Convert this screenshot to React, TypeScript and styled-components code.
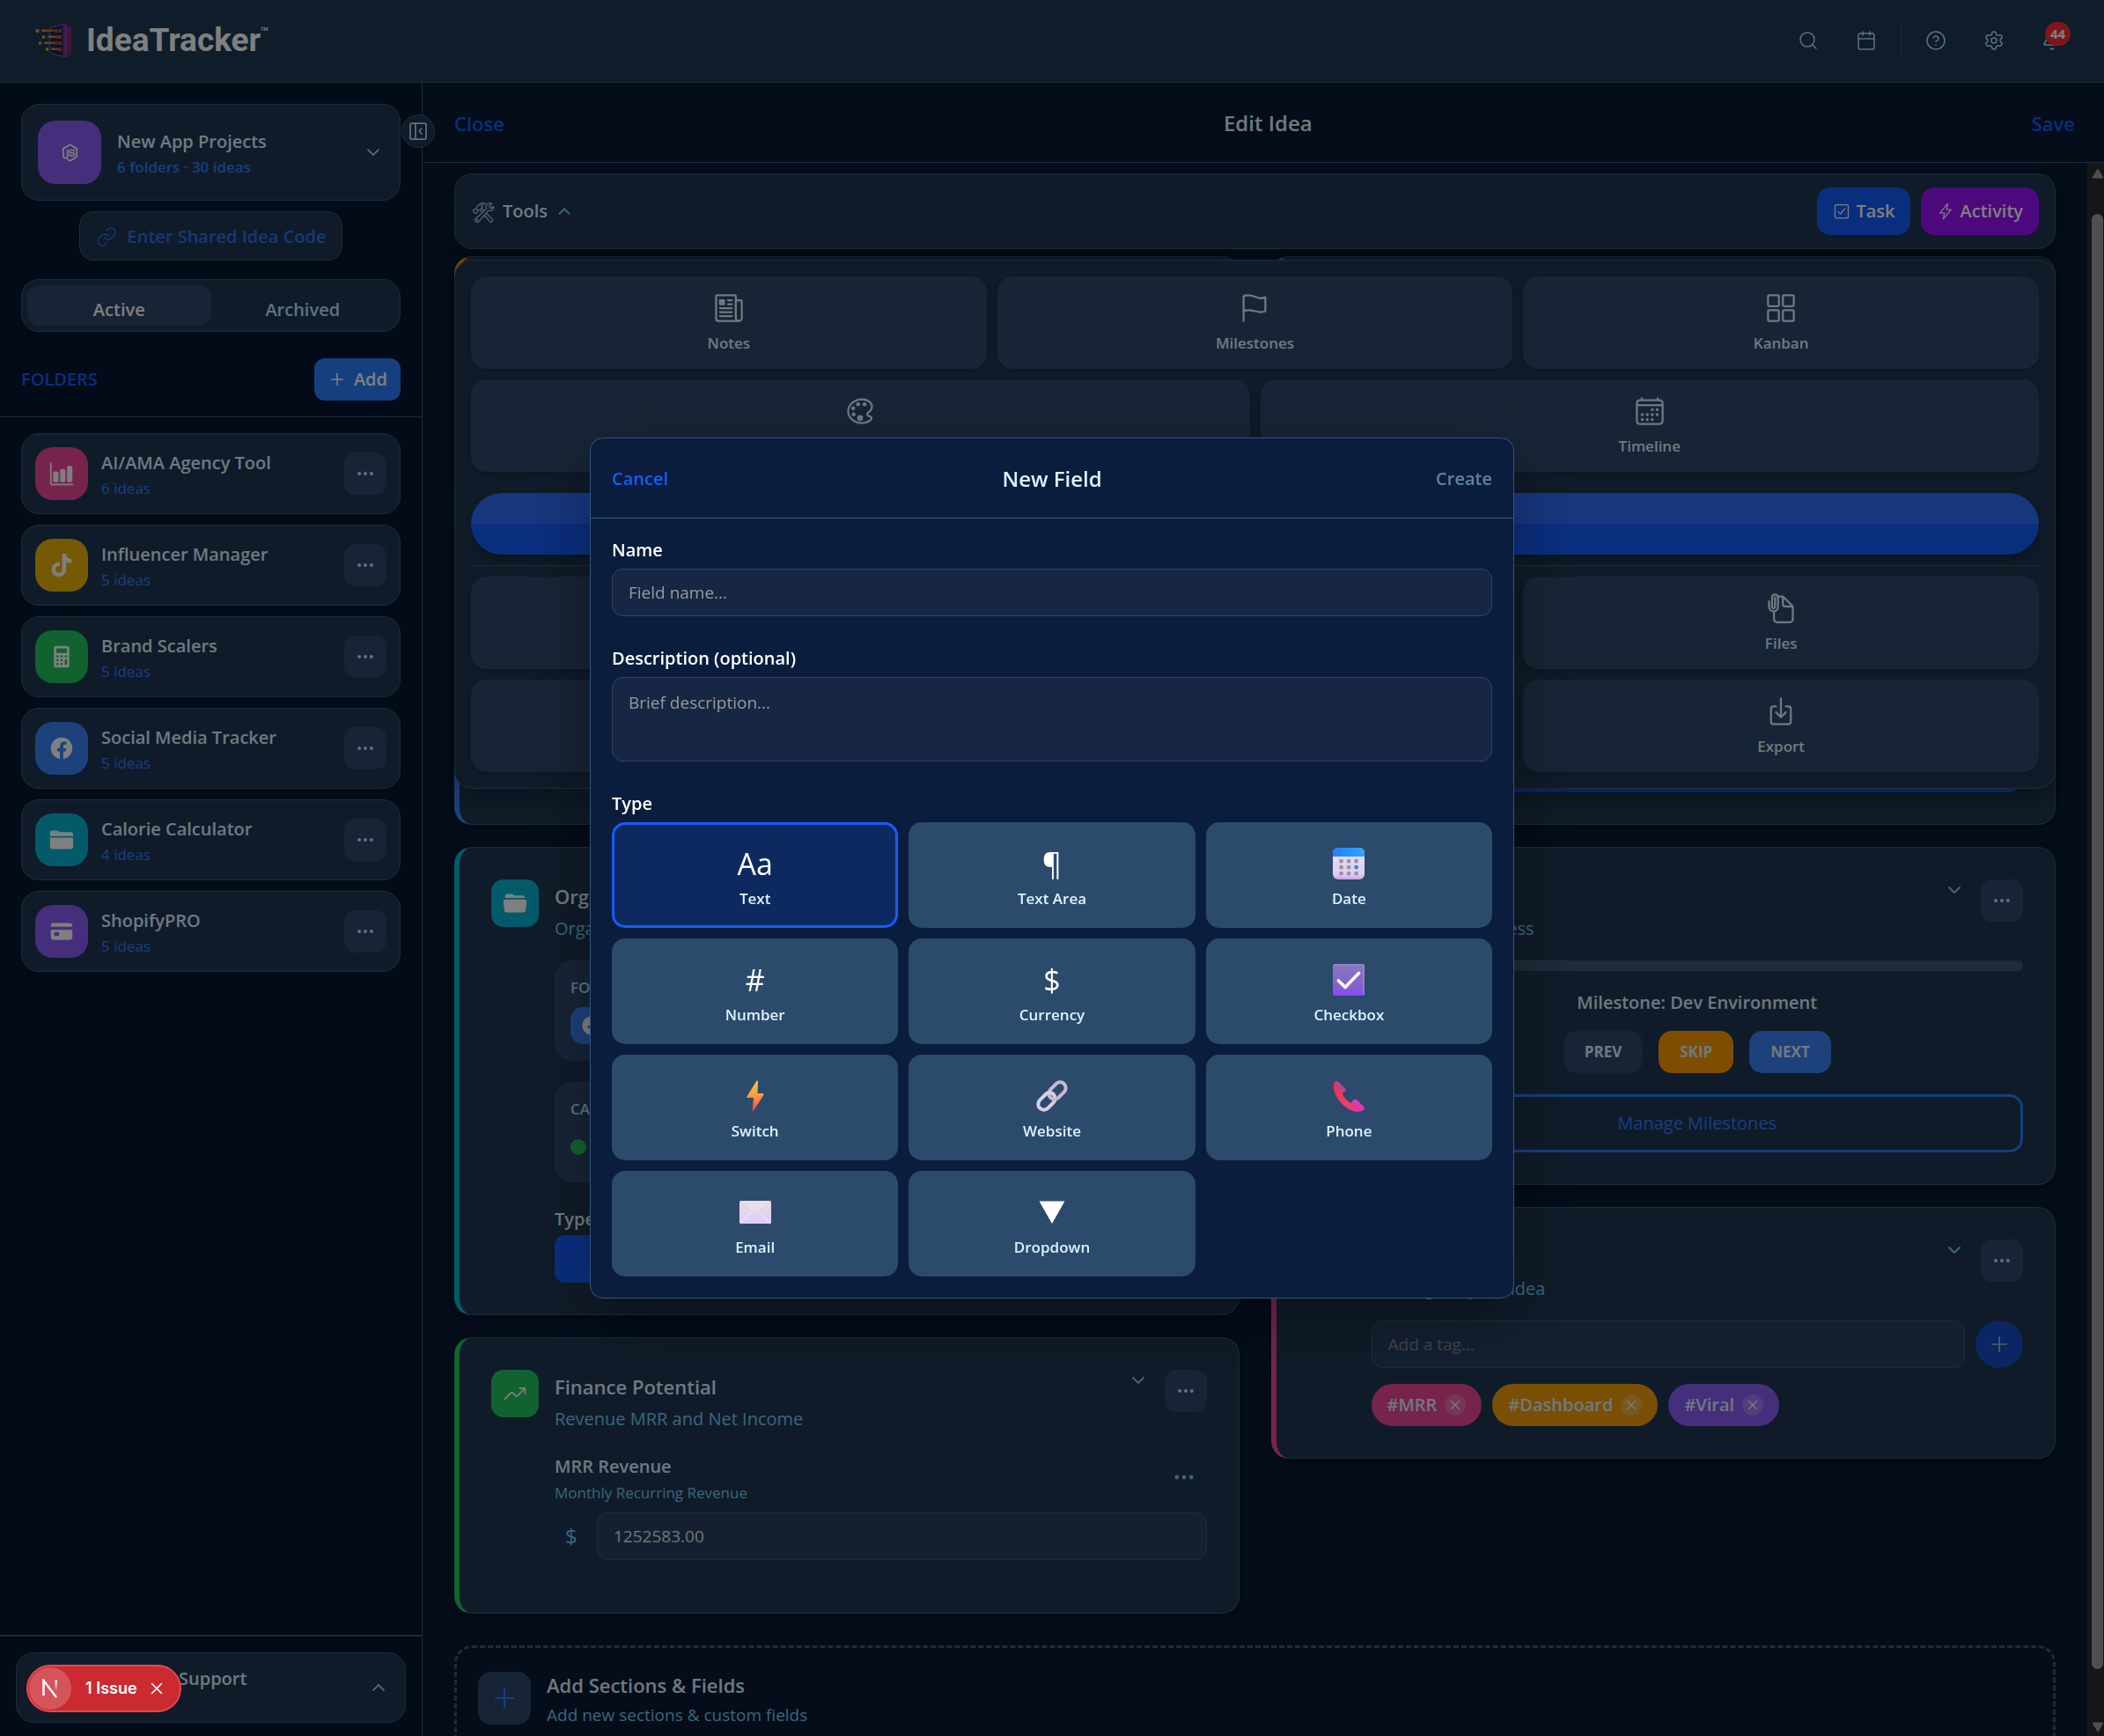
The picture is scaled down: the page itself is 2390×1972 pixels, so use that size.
import React from 'react';
import styled, { createGlobalStyle, css } from 'styled-components';
import {
  Calendar, ChevronDown, ChevronUp, CircleHelp, Bell, Link as LinkIcon, Plus, Search, Settings, X, PanelLeftClose,
} from 'lucide-react';
import {
  IoBarChart, IoCalculator, IoCalendarOutline, IoCard, IoCheckboxOutline, IoColorPaletteOutline,
  IoDocumentAttachOutline, IoDownloadOutline, IoEllipsisHorizontal, IoFlagOutline, IoFlashOutline, IoFolder,
  IoFolderOpen, IoGridOutline, IoLogoFacebook, IoLogoNodejs, IoLogoTiktok, IoNewspaperOutline, IoTrendingUp,
} from 'react-icons/io5';

const c = {
  page: '#081a32',
  side: '#04162e',
  bar: '#1f3854',
  card: '#1f3752',
  tile: '#2d496a',
  line: '#3a5674',
  field: '#284060',
  fieldLine: '#40587a',
  blue: '#155dfc',
  sky: '#2b7fff',
  head: '#dff2fe',
  soft: '#b8e6fe',
  muted: '#74ccf4',
};

const Global = createGlobalStyle`
  *, *::before, *::after { box-sizing: border-box; }
  body {
    margin: 0;
    background: ${c.page};
    color: ${c.head};
    font-family: "Open Sans", "Noto Sans", sans-serif;
    font-size: 20px;
    line-height: 30px;
  }
  button, input, textarea { font: inherit; color: inherit; }
  button { border: 0; padding: 0; background: none; cursor: pointer; }
  h1, h2, h3, p { margin: 0; font: inherit; }
  svg { display: block; flex: none; }
`;

const Shell = styled.div`
  display: flex;
  flex-direction: column;
  height: 100vh;
  overflow: hidden;
`;

/* ---------- top bar ---------- */

const TopBar = styled.header`
  display: flex;
  align-items: center;
  justify-content: space-between;
  height: 94px;
  flex: none;
  padding: 0 32px 2px 40px;
  background: ${c.bar};
  border-bottom: 1px solid ${c.line};
`;

const Brand = styled.a`
  display: flex;
  align-items: center;
  gap: 16px;
  color: #fff;
  text-decoration: none;
  font: 700 37px/40px Roboto, sans-serif;
`;

const Wordmark = styled.span`
  display: flex;
  align-items: flex-start;
`;

const Mark = styled.sup`
  font: 700 12px/18px "Open Sans", sans-serif;
`;

const TopActions = styled.nav`
  display: flex;
  align-items: center;
  gap: 12px;
  color: ${c.soft};
`;

const IconButton = styled.button`
  position: relative;
  display: grid;
  place-items: center;
  width: 54px;
  height: 54px;
`;

const Separator = styled.span`
  width: 1px;
  height: 36px;
  background: ${c.line};
`;

const Count = styled.span`
  position: absolute;
  top: 6px;
  left: 19px;
  width: 29px;
  height: 27px;
  border-radius: 14px;
  background: #fb2c36;
  color: #fff;
  font-size: 15px;
  font-weight: 700;
  line-height: 27px;
`;

/* ---------- sidebar ---------- */

const Body = styled.div`
  display: flex;
  flex: 1;
  min-height: 0;
`;

const Sidebar = styled.aside`
  position: relative;
  display: flex;
  flex-direction: column;
  width: 480px;
  flex: none;
  background: ${c.side};
  border-right: 1px solid ${c.line};
`;

const Collapse = styled.button`
  position: absolute;
  z-index: 2;
  top: 36px;
  right: -15px;
  display: grid;
  place-items: center;
  width: 38px;
  height: 38px;
  border: 1px solid ${c.line};
  border-radius: 50%;
  background: ${c.card};
  color: ${c.soft};
`;

const SideTop = styled.div`
  display: flex;
  flex-direction: column;
  padding: 24px 24px 18px;
  border-bottom: 1px solid ${c.line};
`;

const surface = css`
  background: ${c.card};
  border: 1px solid ${c.line};
  border-radius: 20px;
`;

const Workspace = styled.button`
  ${surface}
  display: flex;
  align-items: center;
  gap: 18px;
  height: 110px;
  padding: 0 18px;
  text-align: left;
  color: ${c.soft};
`;

const Badge = styled.span<{ $size: number; $color: string }>`
  display: grid;
  place-items: center;
  flex: none;
  width: ${p => p.$size}px;
  height: ${p => p.$size}px;
  border-radius: ${p => (p.$size > 54 ? 20 : 14)}px;
  background: ${p => p.$color};
  color: #fff;
`;

const Stack = styled.span`
  display: flex;
  flex-direction: column;
  flex: 1;
  min-width: 0;
`;

const SideText = styled(Stack)`
  padding-top: 4px;
`;

const Name = styled.span`
  color: ${c.head};
  font-weight: 600;
`;

const Meta = styled.span<{ $strong?: boolean }>`
  color: ${c.sky};
  font-size: 17px;
  font-weight: ${p => (p.$strong ? 600 : 400)};
  line-height: 28px;
`;

const ShareCode = styled.button`
  display: flex;
  align-items: center;
  align-self: center;
  gap: 12px;
  height: 56px;
  margin: 12px 0 21px;
  padding: 2px 18px 0;
  background: ${c.card};
  border: 1px solid ${c.line};
  border-radius: 16px;
  color: #2b72ea;
  font-weight: 600;
`;

const Tabs = styled.div`
  ${surface}
  display: grid;
  grid-template-columns: 1fr 1fr;
  height: 60px;
  padding: 6px;
`;

const Tab = styled.button<{ $on?: boolean }>`
  padding-top: 10px;
  border-radius: 14px;
  background: ${p => (p.$on ? c.tile : 'none')};
  color: ${p => (p.$on ? '#fff' : c.soft)};
  font-weight: 600;
`;

const FolderHead = styled.div`
  display: flex;
  align-items: center;
  justify-content: space-between;
  margin-top: 30px;
  color: ${c.blue};
  font-weight: 600;
`;

const AddButton = styled.button`
  display: flex;
  align-items: center;
  gap: 8px;
  height: 48px;
  padding: 0 15px;
  border-radius: 12px;
  background: ${c.sky};
  color: #fff;
  font-weight: 600;
`;

const FolderList = styled.ul`
  display: flex;
  flex-direction: column;
  gap: 12px;
  flex: 1;
  margin: 0;
  padding: 18px 24px;
  list-style: none;
`;

const FolderRow = styled.li`
  ${surface}
  display: flex;
  align-items: center;
  gap: 15px;
  height: 92px;
  padding: 0 15px;
`;

const MenuButton = styled.button`
  display: grid;
  place-items: center;
  width: 48px;
  height: 48px;
  flex: none;
  border-radius: 13px;
  background: ${c.tile};
  color: ${c.soft};
`;

const SideFoot = styled.div`
  padding: 18px 18px 15px;
  border-top: 2px solid ${c.line};
`;

const Support = styled.button`
  ${surface}
  display: flex;
  align-items: center;
  width: 100%;
  height: 80px;
  padding: 0 18px 0 184px;
  text-align: left;
  color: ${c.soft};
`;

const SupportText = styled(Stack)`
  padding-bottom: 20px;
`;

/* ---------- editor ---------- */

const Main = styled.main`
  display: flex;
  flex-direction: column;
  flex: 1;
  min-width: 0;
`;

const EditorBar = styled.div`
  display: flex;
  align-items: center;
  justify-content: space-between;
  height: 91px;
  flex: none;
  padding: 2px 33px 0 36px;
  border-bottom: 1px solid ${c.line};
  font-size: 22px;
`;

const TextButton = styled.button<{ $muted?: boolean }>`
  color: ${p => (p.$muted ? 'rgba(184, 230, 254, 0.5)' : c.blue)};
  font-weight: 600;
`;

const EditorTitle = styled.h1`
  font-size: 24px;
  font-weight: 600;
`;

const Viewport = styled.div`
  display: flex;
  flex: 1;
  min-height: 0;
  overflow: hidden;
`;

const Canvas = styled.div`
  display: flex;
  flex-direction: column;
  flex: 1;
  min-width: 0;
  padding: 12px 36px 0;
`;

const ToolBar = styled.section`
  ${surface}
  position: relative;
  display: flex;
  align-items: center;
  gap: 12px;
  height: 86px;
  flex: none;
  padding: 0 18px;
  box-shadow: 0 6px 24px rgba(0, 0, 0, 0.35);
`;

const ToolsToggle = styled.button`
  display: flex;
  align-items: center;
  gap: 8px;
  margin-right: auto;
  font-weight: 600;
  color: ${c.head};
`;

const Glyph = styled.span`
  font-size: 22px;
  font-weight: 400;
`;

const Action = styled.button<{ $color: string }>`
  display: flex;
  align-items: center;
  gap: 6px;
  height: 54px;
  padding: 0 18px;
  border-radius: 15px;
  background: ${p => p.$color};
  color: #fff;
  font-weight: 600;
`;

const ToolMenu = styled.div`
  ${surface}
  position: absolute;
  z-index: 1;
  top: 97px;
  left: -1px;
  right: -1px;
  display: flex;
  flex-direction: column;
  gap: 12px;
  padding: 18px;
  box-shadow: 0 8px 24px rgba(0, 0, 0, 0.35);
`;

const ToolRow = styled.div<{ $cols: number }>`
  display: grid;
  grid-template-columns: repeat(${p => p.$cols}, 1fr);
  gap: 12px;
`;

const ToolTile = styled.button`
  display: flex;
  flex-direction: column;
  align-items: center;
  justify-content: center;
  gap: 9px;
  height: 105px;
  padding-top: 2px;
  border-radius: 18px;
  background: ${c.tile};
  box-shadow: 0 3px 8px rgba(0, 0, 0, 0.2);
  color: ${c.head};
  font-size: 17px;
  font-weight: 600;
  line-height: 26px;
`;

const Pill = styled.button`
  height: 70px;
  margin-top: 12px;
  border-radius: 35px;
  background: linear-gradient(rgba(255, 255, 255, 0.1) 50%, transparent 50%) ${c.blue};
  box-shadow: 0 6px 14px rgba(0, 0, 0, 0.25);
`;

const Rule = styled.hr`
  width: 100%;
  height: 1px;
  margin: 0;
  border: 0;
  background: ${c.line};
`;

const Columns = styled.div`
  display: grid;
  grid-template-columns: 1fr 1fr;
  align-items: start;
  gap: 36px;
  margin-top: 8px;
`;

const Column = styled.div`
  display: flex;
  flex-direction: column;
  gap: 25px;
`;

const Section = styled.section<{ $accent: string; $min?: number }>`
  ${surface}
  display: flex;
  gap: 18px;
  min-height: ${p => p.$min ?? 0}px;
  padding: 36px;
  border-left: 6px solid ${p => p.$accent};
  box-shadow: 0 3px 9px rgba(0, 0, 0, 0.3);
`;

const SectionBody = styled.div`
  display: flex;
  flex-direction: column;
  flex: 1;
  min-width: 0;
`;

const SectionHead = styled.div`
  display: flex;
  gap: 18px;
  padding-bottom: 18px;
`;

const SectionTitle = styled.h2`
  font-size: 22px;
  font-weight: 600;
  line-height: 38px;
`;

const SectionNote = styled.p`
  color: ${c.muted};
  line-height: 36px;
`;

const Caret = styled.button`
  width: 24px;
  height: 24px;
  color: ${c.muted};
  svg { margin: 0 auto; }
`;

const Box = styled.div`
  display: flex;
  flex-direction: column;
  align-items: flex-start;
  gap: 9px;
  height: 114px;
  margin-bottom: 24px;
  padding: 18px;
  border-radius: 20px;
  background: ${c.tile};
`;

const BoxLabel = styled.h3`
  color: ${c.soft};
  font-size: 17px;
  font-weight: 600;
  line-height: 26px;
`;

const Chip = styled.span`
  display: flex;
  align-items: center;
  gap: 9px;
  height: 42px;
  padding: 0 12px;
  border-radius: 14px;
  background: #3b82f6;
  color: #fff;
`;

const Status = styled.span`
  display: flex;
  align-items: center;
  gap: 12px;
  padding-top: 6px;
`;

const Dot = styled.i`
  width: 18px;
  height: 18px;
  border-radius: 50%;
  background: #22c55e;
`;

const InnerCard = styled.div`
  height: 66px;
  margin-top: auto;
  border: 1px solid ${c.line};
  border-radius: 12px;
`;

const FieldTitle = styled.h3`
  font-weight: 600;
  line-height: 36px;
`;

const FieldNote = styled.span`
  color: ${c.muted};
  font-size: 17px;
  line-height: 24px;
`;

const TypeButton = styled.button`
  height: 54px;
  border-radius: 12px;
  background: ${c.blue};
  color: #fff;
`;

const BottomButton = styled.button`
  height: 66px;
  margin-top: auto;
  border-radius: 18px;
  background: ${c.blue};
`;

const FieldRow = styled.div`
  display: flex;
  align-items: center;
`;

const Dots = styled.button`
  display: grid;
  place-items: center;
  width: 51px;
  height: 36px;
  color: ${c.muted};
`;

const MoneyRow = styled.label`
  display: flex;
  align-items: center;
  margin: 10px 0 24px;
  color: ${c.muted};
  font-size: 24px;
`;

const Currency = styled.span`
  width: 48px;
  padding-left: 12px;
`;

const TextField = styled.input<{ $modal?: boolean }>`
  flex: none;
  width: 100%;
  height: 54px;
  padding: 0 18px;
  border: 1px solid ${p => (p.$modal ? '#34425f' : c.fieldLine)};
  border-radius: 12px;
  background: ${p => (p.$modal ? '#172642' : c.field)};
  color: #e6e6e6;
  font-size: 19px;
  outline: 0;
  &::placeholder { color: ${p => (p.$modal ? '#9a9a9e' : '#868688')}; opacity: 1; }
`;

const InlineField = styled(TextField)`
  flex: 1;
  width: auto;
  min-width: 0;
`;

const Progress = styled.div`
  height: 12px;
  border-radius: 6px;
  background: #3c5674;
`;

const Milestone = styled.p`
  margin: 20px 0 16px;
  text-align: center;
  font-weight: 600;
  line-height: 32px;
`;

const Steps = styled.div`
  display: flex;
  justify-content: center;
  gap: 18px;
`;

const Step = styled.button<{ $color: string }>`
  height: 48px;
  padding: 0 24px;
  border-radius: 15px;
  background: ${p => p.$color};
  color: ${c.head};
  font-size: 17px;
  font-weight: 700;
`;

const Outline = styled.button`
  height: 66px;
  margin-top: 24px;
  border: 3px solid ${c.sky};
  border-radius: 15px;
  color: ${c.sky};
  font-weight: 500;
`;

const TagEntry = styled.div`
  display: flex;
  gap: 12px;
`;

const Round = styled.button`
  display: grid;
  place-items: center;
  width: 54px;
  height: 54px;
  flex: none;
  border-radius: 50%;
  background: #164dc4;
  color: #a6b4ca;
`;

const TagList = styled.ul`
  display: flex;
  gap: 12px;
  margin: 18px 0 0;
  padding: 0;
  list-style: none;
`;

const Tag = styled.li<{ $color: string }>`
  display: flex;
  align-items: center;
  gap: 9px;
  height: 48px;
  padding: 0 18px;
  border-radius: 24px;
  background: ${p => p.$color};
  font-weight: 600;
`;

const TagRemove = styled.button`
  display: grid;
  place-items: center;
  width: 24px;
  height: 24px;
  border-radius: 50%;
  background: rgba(255, 255, 255, 0.2);
`;

const AddSection = styled.button`
  display: flex;
  gap: 18px;
  height: 126px;
  flex: none;
  margin-top: 36px;
  padding: 27px 24px;
  border: 3px dashed ${c.line};
  border-radius: 20px;
  text-align: left;
`;

const AddIcon = styled.span`
  display: grid;
  place-items: center;
  width: 60px;
  height: 60px;
  border-radius: 15px;
  background: ${c.tile};
  color: ${c.sky};
`;

const AddTitle = styled.span`
  font-size: 22px;
  font-weight: 600;
  line-height: 30px;
`;

const AddNote = styled.span`
  color: ${c.muted};
  font-size: 19px;
  line-height: 38px;
`;

const Scrollbar = styled.div`
  display: flex;
  flex-direction: column;
  align-items: center;
  justify-content: space-between;
  width: 19px;
  flex: none;
  padding: 6px 0 4px 4px;
  background: #2c2c2c;
  color: #9f9f9f;
`;

const Thumb = styled.i`
  width: 13px;
  height: 93%;
  margin: 40px 0 auto;
  border-radius: 7px;
  background: #9f9f9f;
`;

/* ---------- modal ---------- */

const Backdrop = styled.div`
  position: fixed;
  z-index: 5;
  inset: 0;
  display: flex;
  align-items: center;
  justify-content: center;
  background: rgba(0, 0, 0, 0.5);
`;

const Modal = styled.form`
  width: 1050px;
  max-width: 94vw;
  border: 1px solid #37547c;
  border-radius: 15px;
  background: #0a1d3d;
  box-shadow: 0 24px 72px rgba(0, 0, 0, 0.3);
`;

const ModalHead = styled.div`
  display: flex;
  align-items: center;
  justify-content: space-between;
  height: 91px;
  padding: 2px 24px 0;
  border-bottom: 1px solid #37547c;
`;

const ModalTitle = styled.h2`
  font-size: 24px;
  font-weight: 600;
`;

const ModalBody = styled.div`
  display: flex;
  flex-direction: column;
  gap: 36px;
  padding: 24px;
`;

const Field = styled.div`
  display: flex;
  flex-direction: column;
  gap: 9px;
`;

const Label = styled.label`
  color: #fff;
  font-weight: 600;
  line-height: 24px;
`;

const Area = styled(TextField)`
  height: 96px;
  padding: 13px 18px;
  line-height: 30px;
  resize: none;
`;

const TypeGrid = styled.div`
  display: grid;
  grid-template-columns: repeat(3, 1fr);
  gap: 12px;
`;

const TypeTile = styled.button<{ $on?: boolean }>`
  display: flex;
  flex-direction: column;
  align-items: center;
  justify-content: center;
  height: 120px;
  border: 3px solid ${p => (p.$on ? c.blue : 'transparent')};
  border-radius: 15px;
  background: ${p => (p.$on ? '#0d2960' : '#2c4a6c')};
  color: ${c.head};
  font-size: 17px;
  font-weight: 600;
  line-height: 26px;
`;

const TypeGlyph = styled.span`
  display: grid;
  place-items: center;
  height: 54px;
  color: #fff;
  font-size: 34px;
  font-weight: 400;
`;

const Issue = styled.div`
  position: fixed;
  z-index: 6;
  left: 30px;
  bottom: 27px;
  display: flex;
  align-items: center;
  height: 54px;
  padding: 0 15px 0 1px;
  border: 2px solid #e5484d;
  border-radius: 27px;
  background: #ca2a30;
  color: #fff;
  font: 600 18px/30px Inter, sans-serif;
`;

const IssueLogo = styled.span`
  display: grid;
  place-items: center;
  width: 48px;
  height: 48px;
  margin-right: 16px;
  border-radius: 50%;
  background: rgba(255, 255, 255, 0.2);
`;

const IssueClose = styled.button`
  margin-left: 11px;
`;

/* ---------- drawings ---------- */

const Logo = () => (
  <svg width="42" height="38" viewBox="0 0 42 38">
    <defs>
      <linearGradient id="lgA" x1="0" y1="0" x2="1" y2="0">
        <stop offset="0" stopColor="#1f6fb0" />
        <stop offset="1" stopColor="#a02fb4" />
      </linearGradient>
      <linearGradient id="lgB" x1="0" y1="0" x2="1" y2="0">
        <stop offset="0" stopColor="#d99a2a" />
        <stop offset="1" stopColor="#e2463a" />
      </linearGradient>
    </defs>
    <path d="M18 4 L33 .5 Q36 .5 36 4 V34 Q36 37.5 33 37.5 L18 34 Q16.500 33 16.500 31 V7 Q16.500 4.500 18 4Z" fill="#14284e" stroke="url(#lgA)" strokeWidth="1.500" />
    <path d="M31.500 1 L35 1 Q37 2 37 5 V33 Q37 36 35 37 L31.500 37Z" fill="#7a3a9c" />
    <path d="M37.500 2 H39 Q41 3 41 6 V32 Q41 35 39 36 H37.500Z" fill="#a01f78" />
    <g fill="url(#lgB)">
      <rect x="7" y="6.500" width="15" height="2.600" rx="1.300" />
      <rect x="14" y="13.500" width="16" height="2.600" rx="1.300" />
      <rect x="10" y="20.500" width="16" height="2.600" rx="1.300" />
      <rect x="18" y="27.500" width="12" height="2.600" rx="1.300" />
    </g>
    <g fill="#d23c2e">
      <rect x="22" y="6" width="3.500" height="4" /><rect x="26.500" y="6" width="3.500" height="4" />
      <rect x="25" y="13" width="5" height="4" />
      <rect x="22" y="20" width="3.500" height="4" /><rect x="26.500" y="20" width="3.500" height="4" />
      <rect x="25" y="27" width="5" height="4" />
    </g>
    <g fill="#e0a02c">
      <circle cx="2.500" cy="8" r="2.200" /><circle cx="9.500" cy="15" r="1.900" />
      <circle cx="5.500" cy="22" r="1.900" /><circle cx="13.500" cy="29" r="1.900" />
    </g>
  </svg>
);

const DateArt = () => (
  <svg width="36" height="36" viewBox="0 0 36 36">
    <defs>
      <linearGradient id="dTop" x1="0" y1="0" x2="1" y2="0">
        <stop offset="0" stopColor="#2a7df5" /><stop offset="1" stopColor="#2fa6ff" />
      </linearGradient>
      <linearGradient id="dBody" x1="0" y1="0" x2="0" y2="1">
        <stop offset="0" stopColor="#e9e2ef" /><stop offset=".85" stopColor="#dccff0" /><stop offset="1" stopColor="#cfa0ea" />
      </linearGradient>
    </defs>
    <rect x="0" y="0" width="36" height="36" rx="6" fill="url(#dBody)" />
    <path d="M0 10 V6 Q0 0 6 0 H30 Q36 0 36 6 V10Z" fill="url(#dTop)" />
    <g fill="#998fa8">
      {[13, 20, 27].map(y => [7.5, 16, 24.5].map(x => (
        <rect key={`${x}-${y}`} x={x} y={y} width="4.200" height="4.200" rx=".8" fill={x > 20 && y === 20 ? '#1d8ceb' : undefined} />
      )))}
    </g>
  </svg>
);

const CheckArt = () => (
  <svg width="36" height="36" viewBox="0 0 36 36">
    <defs>
      <linearGradient id="ck" x1="0" y1="0" x2="0" y2="1">
        <stop offset="0" stopColor="#8a78bd" /><stop offset=".7" stopColor="#8461cf" /><stop offset="1" stopColor="#8c46f5" />
      </linearGradient>
    </defs>
    <rect width="36" height="36" rx="2.500" fill="url(#ck)" />
    <path d="M1 1 H35 V35" fill="none" stroke="#9d8cd0" strokeWidth="1.200" />
    <path d="M6.500 19 L14 26.500 L29.500 10.500" fill="none" stroke="#fff" strokeWidth="3.600" strokeLinecap="round" strokeLinejoin="round" />
  </svg>
);

const BoltArt = () => (
  <svg width="36" height="36" viewBox="0 0 36 36">
    <defs>
      <linearGradient id="bolt" x1="0" y1="0" x2="0" y2="1">
        <stop offset="0" stopColor="#ffc83d" /><stop offset=".5" stopColor="#ff9a3c" /><stop offset="1" stopColor="#f0405a" />
      </linearGradient>
    </defs>
    <path d="M19.500 .8 L8.500 18.500 Q7.800 20 9.300 20 H16 L14.800 34 Q15 36 16.300 34.600 L27.400 16.700 Q28.200 15 26.500 15 H20.500 L21 1.300 Q20.600 0 19.500 .8Z" fill="url(#bolt)" />
  </svg>
);

const ChainArt = () => (
  <svg width="36" height="36" viewBox="0 0 36 36">
    <g fill="none" strokeWidth="4" transform="rotate(-45 18 18)">
      <rect x="-1.500" y="11.500" width="22" height="13" rx="6.500" stroke="#d9cfe0" />
      <rect x="15.500" y="11.500" width="22" height="13" rx="6.500" stroke="#c6b9cf" />
      <path d="M14 11.500 Q20.500 12 20.500 18" stroke="#d9cfe0" />
    </g>
  </svg>
);

const PhoneArt = () => (
  <svg width="36" height="36" viewBox="0 0 36 36">
    <defs>
      <linearGradient id="ph" x1="0" y1="0" x2="1" y2="1">
        <stop offset="0" stopColor="#e8304a" /><stop offset=".6" stopColor="#f03c6e" /><stop offset="1" stopColor="#e830b0" />
      </linearGradient>
    </defs>
    <path d="M2.500 1.500 C0 4 0 10 3 16 C7 25 14 32 23 35 C28 36.500 33 36 35 33.500 L24 23 L20.500 26 C16 24 12 19 11 15 L14 12 Z" fill="url(#ph)" />
    <path d="M2.800 1.200 Q4.500 0 6 1.500 L14 9.500 Q15.500 11.500 13.500 13 Q11 14.500 9 12.500 Q4 8 2.800 1.200Z" fill="#b8458f" />
    <path d="M22.500 23.500 Q25 20 27.500 22.500 L35 30 Q36.800 32 34.500 34 Q28 32 23 27 Q21.500 25 22.500 23.500Z" fill="#d93bb4" />
  </svg>
);

const MailArt = () => (
  <svg width="36" height="36" viewBox="0 0 36 36">
    <defs>
      <linearGradient id="ml" x1="0" y1="0" x2="0" y2="1">
        <stop offset="0" stopColor="#e6dde6" /><stop offset="1" stopColor="#e2cdf8" />
      </linearGradient>
    </defs>
    <rect x="0" y="5" width="36" height="26" rx="1.500" fill="url(#ml)" />
    <path d="M1 30 L14 18 M35 30 L22 18" stroke="#f4ecfa" strokeWidth="1" />
    <path d="M0 6 L16 19 Q18 20.500 20 19 L36 6" fill="#e8e0e9" stroke="#d6cadf" strokeWidth=".8" />
  </svg>
);

const TriangleArt = () => (
  <svg width="36" height="36" viewBox="0 0 36 36"><path d="M3.500 5.500 H32.500 L18 31Z" fill="#fff" /></svg>
);

const NextArt = () => (
  <svg width="20" height="22" viewBox="0 0 20 22">
    <defs>
      <linearGradient id="nx" x1="0" y1="0" x2="0" y2="1">
        <stop offset="0" stopColor="#fff" /><stop offset="1" stopColor="#fff" stopOpacity="0" />
      </linearGradient>
    </defs>
    <path d="M2.500 19 V2 L17 21" fill="none" stroke="#fff" strokeWidth="2.400" />
    <rect x="15.500" y="1.500" width="2.400" height="13" fill="url(#nx)" />
  </svg>
);

/* ---------- data ---------- */

const folders = [
  { name: 'AI/AMA Agency Tool', ideas: 6, color: '#ec4899', Icon: IoBarChart },
  { name: 'Influencer Manager', ideas: 5, color: '#eab308', Icon: IoLogoTiktok },
  { name: 'Brand Scalers', ideas: 5, color: '#22c55e', Icon: IoCalculator },
  { name: 'Social Media Tracker', ideas: 5, color: '#3b82f6', Icon: IoLogoFacebook },
  { name: 'Calorie Calculator', ideas: 4, color: '#06b6d4', Icon: IoFolder },
  { name: 'ShopifyPRO', ideas: 5, color: '#8b5cf6', Icon: IoCard },
];

const tags = [
  { name: '#MRR', color: '#ec4899' },
  { name: '#Dashboard', color: '#f59e0b' },
  { name: '#Viral', color: '#8b5cf6' },
];

const types: { name: string; glyph: React.ReactNode }[] = [
  { name: 'Text', glyph: 'Aa' },
  { name: 'Text Area', glyph: '¶' },
  { name: 'Date', glyph: <DateArt /> },
  { name: 'Number', glyph: '#' },
  { name: 'Currency', glyph: '$' },
  { name: 'Checkbox', glyph: <CheckArt /> },
  { name: 'Switch', glyph: <BoltArt /> },
  { name: 'Website', glyph: <ChainArt /> },
  { name: 'Phone', glyph: <PhoneArt /> },
  { name: 'Email', glyph: <MailArt /> },
  { name: 'Dropdown', glyph: <TriangleArt /> },
];

const Tile = ({ Icon, children }: { Icon?: React.ComponentType<{ size?: number }>; children?: React.ReactNode }) => (
  <ToolTile type="button">
    {Icon && <Icon size={36} />}
    {children}
  </ToolTile>
);

const Heading = ({ title, note }: { title: string; note: string }) => (
  <SectionHead>
    <Stack>
      <SectionTitle>{title}</SectionTitle>
      <SectionNote>{note}</SectionNote>
    </Stack>
    <Caret type="button" aria-label={`Collapse ${title}`}><ChevronDown size={24} strokeWidth={2} /></Caret>
    <MenuButton type="button" aria-label={`${title} menu`}><IoEllipsisHorizontal size={22} /></MenuButton>
  </SectionHead>
);

export default function App() {
  return (
    <Shell>
      <Global />
      <TopBar>
        <Brand href="#">
          <Logo />
          <Wordmark>IdeaTracker<Mark>™</Mark></Wordmark>
        </Brand>
        <TopActions aria-label="Main">
          <IconButton aria-label="Search"><Search size={24} strokeWidth={1.5} /></IconButton>
          <IconButton aria-label="Calendar"><Calendar size={24} strokeWidth={1.5} /></IconButton>
          <Separator />
          <IconButton aria-label="Help"><CircleHelp size={24} strokeWidth={1.5} /></IconButton>
          <IconButton aria-label="Settings"><Settings size={24} strokeWidth={1.5} /></IconButton>
          <IconButton aria-label="Notifications"><Bell size={24} strokeWidth={1.5} /><Count>44</Count></IconButton>
        </TopActions>
      </TopBar>

      <Body>
        <Sidebar>
          <Collapse aria-label="Collapse sidebar"><PanelLeftClose size={24} strokeWidth={1.75} /></Collapse>
          <SideTop>
            <Workspace>
              <Badge $size={72} $color="#8b5cf6"><IoLogoNodejs size={23} /></Badge>
              <SideText>
                <Name>New App Projects</Name>
                <Meta $strong>6 folders · 30 ideas</Meta>
              </SideText>
              <ChevronDown size={24} strokeWidth={1.75} />
            </Workspace>
            <ShareCode><LinkIcon size={24} strokeWidth={1.5} />Enter Shared Idea Code</ShareCode>
            <Tabs>
              <Tab $on>Active</Tab>
              <Tab>Archived</Tab>
            </Tabs>
            <FolderHead>
              FOLDERS
              <AddButton><Plus size={22} strokeWidth={1.75} />Add</AddButton>
            </FolderHead>
          </SideTop>
          <FolderList>
            {folders.map(({ name, ideas, color, Icon }) => (
              <FolderRow key={name}>
                <Badge $size={60} $color={color}><Icon size={28} /></Badge>
                <SideText>
                  <Name>{name}</Name>
                  <Meta>{ideas} ideas</Meta>
                </SideText>
                <MenuButton aria-label={`${name} menu`}><IoEllipsisHorizontal size={22} /></MenuButton>
              </FolderRow>
            ))}
          </FolderList>
          <SideFoot>
            <Support>
              <SupportText><Name>Support</Name></SupportText>
              <ChevronUp size={24} strokeWidth={1.75} />
            </Support>
          </SideFoot>
        </Sidebar>

        <Main>
          <EditorBar>
            <TextButton>Close</TextButton>
            <EditorTitle>Edit Idea</EditorTitle>
            <TextButton>Save</TextButton>
          </EditorBar>
          <Viewport>
            <Canvas>
              <ToolBar>
                <ToolsToggle>
                  <Glyph>🛠</Glyph>Tools<ChevronUp size={22} strokeWidth={2} color={c.muted} />
                </ToolsToggle>
                <Action $color={c.blue}><IoCheckboxOutline size={20} />Task</Action>
                <Action $color="#9810fa"><IoFlashOutline size={20} />Activity</Action>
                <ToolMenu>
                  <ToolRow $cols={3}>
                    <Tile Icon={IoNewspaperOutline}>Notes</Tile>
                    <Tile Icon={IoFlagOutline}>Milestones</Tile>
                    <Tile Icon={IoGridOutline}>Kanban</Tile>
                  </ToolRow>
                  <ToolRow $cols={2}>
                    <Tile Icon={IoColorPaletteOutline}>Design</Tile>
                    <Tile Icon={IoCalendarOutline}>Timeline</Tile>
                  </ToolRow>
                  <Pill aria-label="Assistant" />
                  <Rule />
                  <ToolRow $cols={3}>
                    <Tile /><Tile />
                    <Tile Icon={IoDocumentAttachOutline}>Files</Tile>
                  </ToolRow>
                  <ToolRow $cols={3}>
                    <Tile /><Tile />
                    <Tile Icon={IoDownloadOutline}>Export</Tile>
                  </ToolRow>
                </ToolMenu>
              </ToolBar>

              <Columns>
                <Column>
                  <Section $accent="#fe9a00" $min={270} />
                  <Section $accent="#3b82f6" $min={351}>
                    <Badge $size={54} $color="#3b82f6" />
                    <SectionBody><InnerCard /></SectionBody>
                  </Section>
                  <Section $accent="#06b6d4">
                    <Badge $size={54} $color="#06b6d4"><IoFolderOpen size={28} /></Badge>
                    <SectionBody>
                      <Heading title="Organization" note="Organize your idea" />
                      <Box>
                        <BoxLabel>FOLDER</BoxLabel>
                        <Chip><IoLogoFacebook size={24} />Social Media Tracker</Chip>
                      </Box>
                      <Box>
                        <BoxLabel>CATEGORY</BoxLabel>
                        <Status><Dot />Active</Status>
                      </Box>
                      <FieldTitle>Type</FieldTitle>
                      <TypeButton aria-label="Idea type" />
                    </SectionBody>
                  </Section>
                  <Section $accent="#22c55e">
                    <Badge $size={54} $color="#22c55e"><IoTrendingUp size={28} /></Badge>
                    <SectionBody>
                      <Heading title="Finance Potential" note="Revenue MRR and Net Income" />
                      <FieldRow>
                        <Stack>
                          <FieldTitle>MRR Revenue</FieldTitle>
                          <FieldNote>Monthly Recurring Revenue</FieldNote>
                        </Stack>
                        <Dots aria-label="MRR Revenue menu"><IoEllipsisHorizontal size={26} /></Dots>
                      </FieldRow>
                      <MoneyRow>
                        <Currency>$</Currency>
                        <InlineField defaultValue="1252583.00" aria-label="MRR Revenue" />
                      </MoneyRow>
                    </SectionBody>
                  </Section>
                </Column>

                <Column>
                  <Section $accent="#8b5cf6" $min={646}>
                    <SectionBody><BottomButton aria-label="Open" /></SectionBody>
                  </Section>
                  <Section $accent="#2b7fff">
                    <Badge $size={54} $color="#2b7fff"><IoFlagOutline size={28} /></Badge>
                    <SectionBody>
                      <Heading title="Progress" note="Track your progress" />
                      <Progress />
                      <Milestone>Milestone: Dev Environment</Milestone>
                      <Steps>
                        <Step $color={c.tile}>PREV</Step>
                        <Step $color="#fe9a00">SKIP</Step>
                        <Step $color="#3b82f6">NEXT</Step>
                      </Steps>
                      <Outline>Manage Milestones</Outline>
                    </SectionBody>
                  </Section>
                  <Section $accent="#ec4899">
                    <Badge $size={54} $color="#ec4899"><IoFlagOutline size={28} /></Badge>
                    <SectionBody>
                      <Heading title="Tags" note="Add tags to your idea" />
                      <TagEntry>
                        <InlineField placeholder="Add a tag..." aria-label="Add a tag" />
                        <Round aria-label="Add tag"><Plus size={28} strokeWidth={1.5} /></Round>
                      </TagEntry>
                      <TagList>
                        {tags.map(t => (
                          <Tag key={t.name} $color={t.color}>
                            {t.name}
                            <TagRemove aria-label={`Remove ${t.name}`}><X size={18} strokeWidth={2} /></TagRemove>
                          </Tag>
                        ))}
                      </TagList>
                    </SectionBody>
                  </Section>
                </Column>
              </Columns>

              <AddSection>
                <AddIcon><Plus size={34} strokeWidth={1.5} /></AddIcon>
                <Stack>
                  <AddTitle>Add Sections &amp; Fields</AddTitle>
                  <AddNote>Add new sections &amp; custom fields</AddNote>
                </Stack>
              </AddSection>
            </Canvas>
            <Scrollbar aria-hidden>
              <svg width="14" height="12" viewBox="0 0 14 12"><path d="M7 1 L13 11 H1Z" fill="currentColor" stroke="currentColor" strokeLinejoin="round" /></svg>
              <Thumb />
              <svg width="14" height="12" viewBox="0 0 14 12"><path d="M7 11 L13 1 H1Z" fill="currentColor" stroke="currentColor" strokeLinejoin="round" /></svg>
            </Scrollbar>
          </Viewport>
        </Main>
      </Body>

      <Backdrop>
        <Modal role="dialog" aria-label="New Field">
          <ModalHead>
            <TextButton type="button">Cancel</TextButton>
            <ModalTitle>New Field</ModalTitle>
            <TextButton type="button" $muted>Create</TextButton>
          </ModalHead>
          <ModalBody>
            <Field>
              <Label htmlFor="field-name">Name</Label>
              <TextField id="field-name" $modal placeholder="Field name..." />
            </Field>
            <Field>
              <Label htmlFor="field-note">Description (optional)</Label>
              <Area as="textarea" id="field-note" $modal placeholder="Brief description..." />
            </Field>
            <Field>
              <Label as="span" id="field-type">Type</Label>
              <TypeGrid role="group" aria-labelledby="field-type">
                {types.map((t, i) => (
                  <TypeTile key={t.name} type="button" $on={i === 0} aria-pressed={i === 0}>
                    <TypeGlyph>{t.glyph}</TypeGlyph>
                    {t.name}
                  </TypeTile>
                ))}
              </TypeGrid>
            </Field>
          </ModalBody>
        </Modal>
      </Backdrop>

      <Issue>
        <IssueLogo><NextArt /></IssueLogo>
        1 Issue
        <IssueClose aria-label="Dismiss"><X size={22} strokeWidth={1.75} /></IssueClose>
      </Issue>
    </Shell>
  );
}
